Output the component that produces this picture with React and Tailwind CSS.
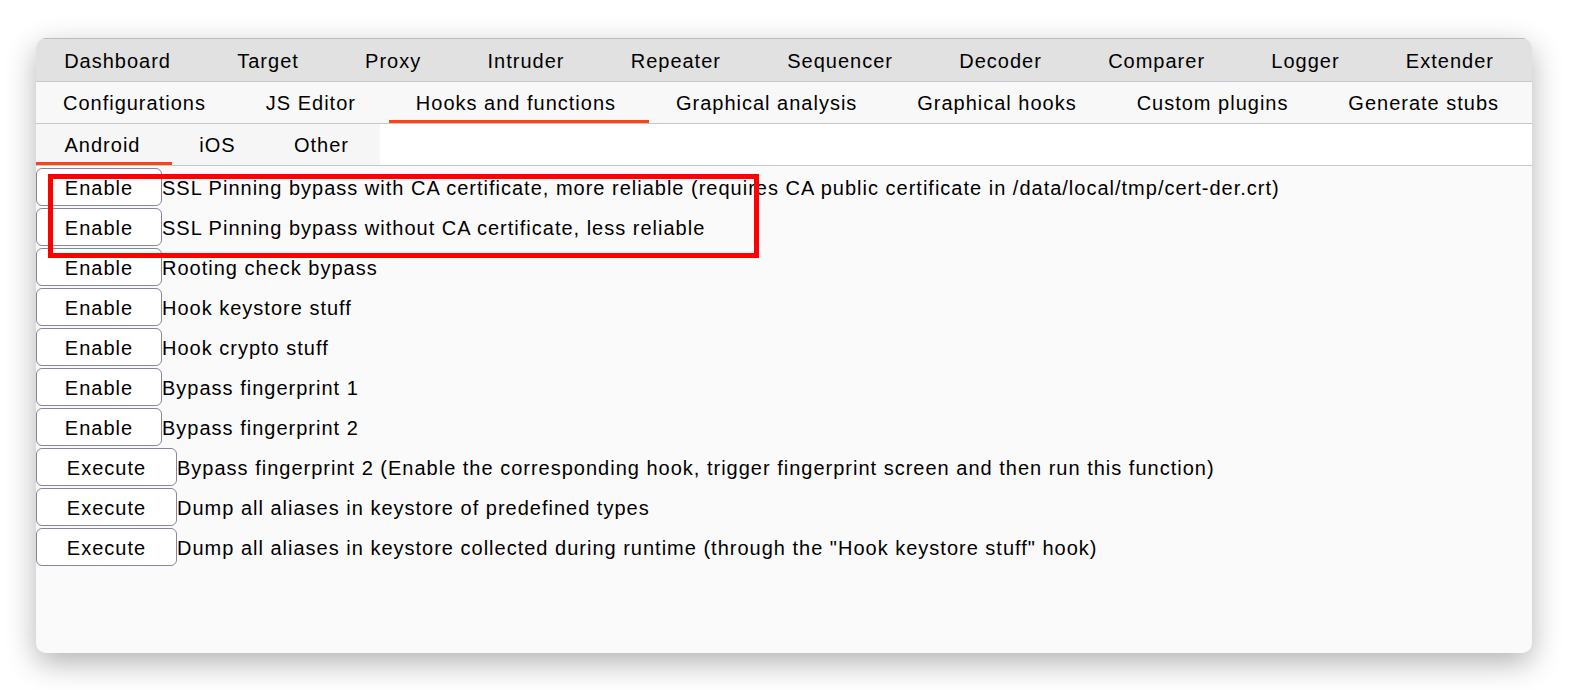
const topTabs = ["Dashboard", "Target", "Proxy", "Intruder", "Repeater", "Sequencer", "Decoder", "Comparer", "Logger", "Extender"];
const subTabs = ["Configurations", "JS Editor", "Hooks and functions", "Graphical analysis", "Graphical hooks", "Custom plugins", "Generate stubs"];
const platformTabs = ["Android", "iOS", "Other"];

const rows = [
  { action: "Enable", label: "SSL Pinning bypass with CA certificate, more reliable (requires CA public certificate in /data/local/tmp/cert-der.crt)" },
  { action: "Enable", label: "SSL Pinning bypass without CA certificate, less reliable" },
  { action: "Enable", label: "Rooting check bypass" },
  { action: "Enable", label: "Hook keystore stuff" },
  { action: "Enable", label: "Hook crypto stuff" },
  { action: "Enable", label: "Bypass fingerprint 1" },
  { action: "Enable", label: "Bypass fingerprint 2" },
  { action: "Execute", label: "Bypass fingerprint 2 (Enable the corresponding hook, trigger fingerprint screen and then run this function)" },
  { action: "Execute", label: "Dump all aliases in keystore of predefined types" },
  { action: "Execute", label: "Dump all aliases in keystore collected during runtime (through the \"Hook keystore stuff\" hook)" },
];

const App = () => {
  return (
    <div
      className="w-full h-[690px] bg-white pt-[38px] pl-[36px] pr-[40px] text-black tracking-[1px]"
      style={{ fontFamily: '"Liberation Sans", Arial, sans-serif' }}
    >
      <div className="relative w-[1496px] h-[615px] rounded-[10px] overflow-hidden bg-[#fafafa] shadow-[0_10px_30px_rgba(0,0,0,0.3)] flex flex-col">
        {/* main tabs */}
        <div className="flex h-[44px] bg-[#e1e1e1] border-t border-[#bdbdbd] border-b border-b-[#c4c7cb]">
          {topTabs.map((t) => (
            <div key={t} className="flex-auto flex items-center justify-center px-[28px] text-[20px]">
              <span className="pt-[1px] -ml-[10px]">{t}</span>
            </div>
          ))}
        </div>

        {/* plugin sub tabs */}
        <div className="flex h-[42px] bg-[#f8f8f8] border-b border-[#c4c7cb]">
          {subTabs.map((t) => (
            <div
              key={t}
              className={`flex-auto flex items-center justify-center px-[28px] text-[20px] border-b-[3px] ${
                t === "Hooks and functions" ? "border-[#fa4417]" : "border-transparent"
              }`}
            >
              <span className="pt-[3px] -ml-[6px]">{t}</span>
            </div>
          ))}
        </div>

        {/* platform tabs */}
        <div className="flex h-[42px] bg-white border-b border-[#c4c7cb]">
          <div className="flex bg-[#f6f6f6]">
            {platformTabs.map((t, i) => (
              <div
                key={t}
                className={`flex items-center justify-center text-[20px] border-b-[3px] ${
                  i === 0 ? "w-[136px] border-[#fa4417]" : i === 1 ? "w-[94px] border-transparent" : "w-[114px] border-transparent"
                }`}
              >
                <span className="pt-[3px] -ml-[3px]">{t}</span>
              </div>
            ))}
          </div>
        </div>

        {/* hook rows */}
        <div className="flex flex-col gap-[2px] pt-[2px]">
          {rows.map((r, i) => (
            <div key={i} className="flex items-center h-[38px]">
              <button
                className={`h-[38px] ${
                  r.action === "Enable" ? "w-[126px]" : "w-[141px]"
                } bg-white border border-[#85859c] rounded-[6px] text-[20px] flex items-center justify-center pt-[2px]`}
              >
                {r.action}
              </button>
              <span className="text-[20px] whitespace-nowrap pt-[1px]">{r.label}</span>
            </div>
          ))}
        </div>

        {/* annotation */}
        <div className="absolute left-[12px] top-[136px] w-[711px] h-[84px] border-[5px] border-[#ff0000]" />
      </div>
    </div>
  );
};

export default App;
